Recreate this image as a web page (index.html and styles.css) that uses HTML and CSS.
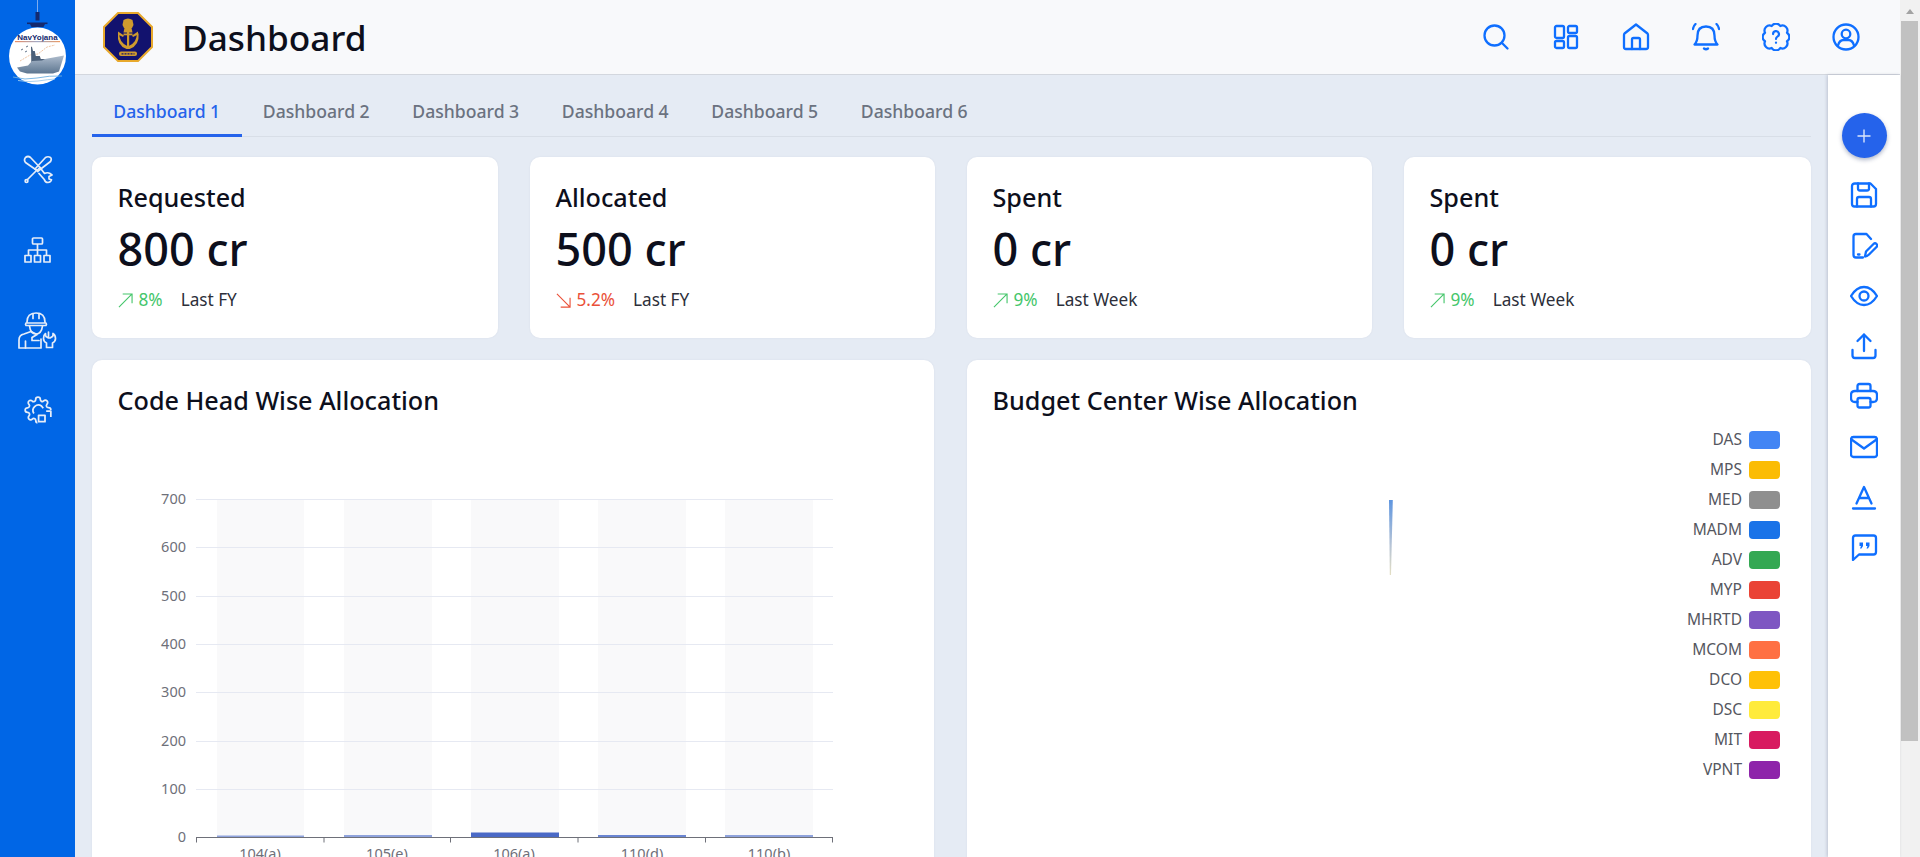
FILE: index.html
```html
<!DOCTYPE html>
<html lang="en">
<head>
<meta charset="utf-8">
<title>Dashboard</title>
<link rel="stylesheet" href="styles.css">
</head>
<body>
<div class="app">
  <aside class="sidebar">
    <div class="brand">
      <svg class="brand-art" viewBox="0 0 75 90" width="75" height="90">
        <defs>
          <linearGradient id="ribbon" x1="0" x2="1"><stop offset="0" stop-color="#e8703a"/><stop offset="0.5" stop-color="#8a94b8"/><stop offset="1" stop-color="#e8803a"/></linearGradient>
          <linearGradient id="hull" x1="0" x2="0" y1="0" y2="1"><stop offset="0" stop-color="#aebccd"/><stop offset="1" stop-color="#5d7690"/></linearGradient>
        </defs>
        <path d="M37.500 0v13" stroke="#9dbcf0" stroke-width="0.8"/>
        <path d="M35.500 12h4v8.500h-4z" fill="#14296e"/>
        <path d="M27 22.500h20.500v1.600h-20.500z" fill="#14296e"/>
        <path d="M30 24h15l-1.500 3h-12z" fill="#14296e"/>
        <circle cx="37.500" cy="56" r="28.500" fill="#fff"/>
        <text class="brand-name" x="37.500" y="39.500" text-anchor="middle">NavYojana</text>
        <rect x="15" y="41" width="45" height="1.200" fill="url(#ribbon)" opacity="0.8"/>
        <path d="M20 61l10-6 8-1 9-7 8-2" fill="none" stroke="#e9b48c" stroke-width="0.8" stroke-dasharray="2 1"/>
        <path d="M21 50l2-1m2 3l2-1m-1-4l2-1" stroke="#50647c" stroke-width="0.9"/>
        <path d="M31 46.500l1 .5 1 4h1.800l1 5h4l1 3h4l.5 2-14 3z" fill="#4c6079"/>
        <path d="M17 67.500l11-2 4-4.500 10-.5 3-1.500 19-3.500-5 16-6 2H27l-7-2z" fill="url(#hull)"/>
        <path d="M13 77q12 3.500 24 1t25-2" fill="none" stroke="#6fb0e0" stroke-width="0.9"/>
        <path d="M18 80.500q10 2 20 .5t17-2" fill="none" stroke="#9fcbec" stroke-width="0.9"/>
      </svg>
    </div>
    <nav class="side-nav">
      <a class="side-item"><svg viewBox="0 0 30 30" width="30" height="30"><g fill="none" stroke="#e6edf8" stroke-width="1.700" stroke-linejoin="round" stroke-linecap="round"><path d="M22.500 2.500L12 14l2.500 2.500L27.500 6.500q1.500-2.500 0-4-2.500-1.500-5 0z"/><path d="M12.500 16.500L4.500 24.500"/><circle cx="3.500" cy="26" r="1.400"/><path d="M2.500 2.500q2.500-2 5 0l9.500 10-3 3-11.500-8q-2-2.500 0-5z"/><path d="M17 12.500l4.500 6q3-1.500 5.500 0l2 1.500-3 1.500v2.500l2.500 .8q-1 2.700-3.500 2.700-3 0-3.700-3l-5.300-6"/></g></svg></a>
      <a class="side-item"><svg viewBox="0 0 27 27" width="27" height="27"><g fill="none" stroke="#e6edf8" stroke-width="1.700" stroke-linejoin="round"><rect x="8.500" y="1" width="10" height="6" rx="1"/><path d="M13.500 7v11M4.500 18v-5h18v5"/><rect x="1" y="18.500" width="6" height="6.500"/><rect x="10.500" y="18.500" width="6" height="6.500"/><rect x="20" y="18.500" width="6" height="6.500"/></g></svg></a>
      <a class="side-item"><svg viewBox="0 0 39 38" width="39" height="38"><g fill="none" stroke="#e6edf8" stroke-width="1.700" stroke-linejoin="round" stroke-linecap="round"><path d="M9 11q0-9 9-9t9 9M8 12h20q1 1 0 2.500H8q-1-1.500 0-2.500z"/><path d="M15 2.500v5M21 2.500v5"/><path d="M11.500 15q1 8 6.500 8t6.500-8"/><path d="M1 37v-8q0-5 5-6l7-2.500 6 3-5 3v3h7M23 37H1M23 37v-9"/><path d="M7.500 37v-7"/><path d="M31 21.500v6l-2.500-1.500q-.5-1-.5-3-2 1.500-2 5 0 3 3 4.500V37h6v-4.500q3-1.500 3-4.500 0-3.500-2.500-5 .2 2-.5 3l-2.500 1.500" transform="translate(-.5 -.5)"/></g></svg></a>
      <a class="side-item"><svg viewBox="0 0 24 24" width="28" height="28"><path d="M19.400 15a1.650 1.650 0 0 0 .33 1.820l.06.06a2 2 0 0 1 0 2.830 2 2 0 0 1-2.830 0l-.06-.06a1.650 1.650 0 0 0-1.820-.33 1.650 1.650 0 0 0-1 1.510V21a2 2 0 0 1-2 2 2 2 0 0 1-2-2v-.09A1.650 1.650 0 0 0 9 19.400a1.650 1.650 0 0 0-1.820.33l-.06.06a2 2 0 0 1-2.830 0 2 2 0 0 1 0-2.830l.06-.06a1.650 1.650 0 0 0 .33-1.820 1.650 1.650 0 0 0-1.510-1H3a2 2 0 0 1-2-2 2 2 0 0 1 2-2h.09A1.650 1.650 0 0 0 4.600 9a1.650 1.650 0 0 0-.33-1.820l-.06-.06a2 2 0 0 1 0-2.830 2 2 0 0 1 2.830 0l.06.06a1.650 1.650 0 0 0 1.820.33H9a1.650 1.650 0 0 0 1-1.510V3a2 2 0 0 1 2-2 2 2 0 0 1 2 2v.09a1.650 1.650 0 0 0 1 1.510 1.650 1.650 0 0 0 1.820-.33l.06-.06a2 2 0 0 1 2.830 0 2 2 0 0 1 0 2.830l-.06.06a1.650 1.650 0 0 0-.33 1.820V9a1.650 1.650 0 0 0 1.510 1H21a2 2 0 0 1 2 2 2 2 0 0 1-2 2h-.09a1.650 1.650 0 0 0-1.510 1z" fill="none" stroke="#e6edf8" stroke-width="1.500"/><rect x="11.500" y="12" width="13" height="12" fill="#0066e6"/><g fill="none" stroke="#e6edf8" stroke-width="1.500" stroke-linejoin="round"><rect x="12.500" y="16.500" width="5.500" height="5.500"/><path d="M19 13h4v5"/><path d="M8.500 15a4.700 4.700 0 0 1 6.500-6.500l1.500 2"/></g></svg></a>
    </nav>
  </aside>

  <div class="main">
    <header class="topbar">
      <div class="topbar-left">
        <svg class="crest" viewBox="0 0 50 50" width="50" height="50">
          <path d="M15 1h20l14 14v20L35 49H15L1 35V15z" fill="#12126e" stroke="#e8a92c" stroke-width="2"/>
          <g fill="#cf9a2e">
            <path d="M20.500 8q4.500-3 9 0l1 5-1.500 3h-8l-1.500-3z"/>
            <path d="M21.500 16h7l1 4.500h-9z"/>
            <path d="M24 20h2.200v14H24z"/>
            <path d="M20.500 21.500h9v1.800h-9z"/>
            <path d="M14.500 21.500l1.800-.5q-.5 9 8 13h1.500q8.500-4 8-13l1.800.5q1 12-9 15.500h-3q-10-3.500-8.600-15.500z"/>
            <path d="M15 19.500l6 4-1 1.500-5-2.500zM35 19.500l-6 4 1 1.500 5-2.500z"/>
            <rect x="16" y="39.500" width="18" height="4.500" rx="2"/>
          </g>
          <path d="M18.500 41.800h13" stroke="#12126e" stroke-width="1.200" stroke-dasharray="2 1"/>
        </svg>
        <h1 class="page-title">Dashboard</h1>
      </div>
      <div class="topbar-icons">
        <svg class="ico" viewBox="0 0 28 28"><circle cx="12.500" cy="12.500" r="10"/><path d="M20 20l5.500 5.500"/></svg>
        <svg class="ico" viewBox="0 0 28 28"><rect x="3" y="3" width="9" height="12" rx="1.500"/><rect x="16" y="3" width="9" height="7" rx="1.500"/><rect x="3" y="18" width="9" height="7" rx="1.500"/><rect x="16" y="13" width="9" height="12" rx="1.500"/></svg>
        <svg class="ico" viewBox="0 0 28 28"><path d="M14 1.500L2.500 10.500q-.5.500-.5 1.500V24q0 2 2 2h20q2 0 2-2V12q0-1-.5-1.500z"/><path d="M10 26V16.500q0-1.500 1.500-1.500h5q1.500 0 1.500 1.500V26"/></svg>
        <svg class="ico" viewBox="0 0 28 28"><path d="M2.500 21.500q3-3 3-9 0-9 8.500-9t8.500 9q0 6 3 9z"/><path d="M12 25.500q2 1.500 4 0"/><path d="M1 6q.3-3 2.500-5M27 6q-.3-3-2.500-5"/></svg>
        <svg class="ico ico-help" viewBox="0 0 24 24"><path d="M15.670 2.600A4.300 4.300 0 0 1 21.400 8.330A4.300 4.300 0 0 1 21.400 15.670A4.300 4.300 0 0 1 15.670 21.400A4.300 4.300 0 0 1 8.330 21.400A4.300 4.300 0 0 1 2.600 15.670A4.300 4.300 0 0 1 2.600 8.330A4.300 4.300 0 0 1 8.330 2.600A4.300 4.300 0 0 1 15.670 2.600z"/><path d="M9.500 9.500a2.500 2.500 0 1 1 3.700 2.200q-1.200.7-1.200 2"/><path d="M12 16.800v.2"/></svg>
        <svg class="ico" viewBox="0 0 28 28"><circle cx="14" cy="14" r="12.500"/><circle cx="14" cy="11" r="4.300"/><path d="M6 22.500q1.500-5.500 5.500-5.500h5q4 0 5.500 5.500"/></svg>
      </div>
    </header>

    <div class="workspace">
      <main class="content">
        <nav class="tabs">
          <a class="tab tab-active">Dashboard 1</a>
          <a class="tab">Dashboard 2</a>
          <a class="tab">Dashboard 3</a>
          <a class="tab">Dashboard 4</a>
          <a class="tab">Dashboard 5</a>
          <a class="tab">Dashboard 6</a>
        </nav>

        <section class="stats">
          <article class="card stat">
            <h2 class="stat-title">Requested</h2>
            <div class="stat-value">800 cr</div>
            <div class="stat-foot"><span class="delta up"><svg class="arrow" viewBox="0 0 16 16"><path d="M1 15L15 1M5 1h10v10"/></svg>8%</span><span class="period">Last FY</span></div>
          </article>
          <article class="card stat">
            <h2 class="stat-title">Allocated</h2>
            <div class="stat-value">500 cr</div>
            <div class="stat-foot"><span class="delta down"><svg class="arrow" viewBox="0 0 16 16"><path d="M1 1l14 14M5 15h10V5"/></svg>5.2%</span><span class="period">Last FY</span></div>
          </article>
          <article class="card stat">
            <h2 class="stat-title">Spent</h2>
            <div class="stat-value">0 cr</div>
            <div class="stat-foot"><span class="delta up"><svg class="arrow" viewBox="0 0 16 16"><path d="M1 15L15 1M5 1h10v10"/></svg>9%</span><span class="period">Last Week</span></div>
          </article>
          <article class="card stat">
            <h2 class="stat-title">Spent</h2>
            <div class="stat-value">0 cr</div>
            <div class="stat-foot"><span class="delta up"><svg class="arrow" viewBox="0 0 16 16"><path d="M1 15L15 1M5 1h10v10"/></svg>9%</span><span class="period">Last Week</span></div>
          </article>
        </section>

        <section class="charts">
          <article class="card chart-card">
            <h2 class="chart-title">Code Head Wise Allocation</h2>
            <svg class="bar-chart" viewBox="0 0 842 460" width="842" height="460">
              <g fill="#f9f9fa">
                <rect x="125" y="79.500" width="87" height="337"/>
                <rect x="252" y="79.500" width="88" height="337"/>
                <rect x="379" y="79.500" width="88" height="337"/>
                <rect x="506" y="79.500" width="88" height="337"/>
                <rect x="633" y="79.500" width="88" height="337"/>
              </g>
              <g stroke="#e6e9f2" stroke-width="1">
                <path d="M104 79.500H741M104 127.500H741M104 176.500H741M104 224.500H741M104 272.500H741M104 321.500H741M104 369.500H741"/>
              </g>
              <g fill="#8fa3dc">
                <rect x="125" y="415.500" width="87" height="1.500"/>
                <rect x="252" y="415" width="88" height="2"/>
                <rect x="506" y="415" width="88" height="2" fill="#6a85d2"/>
                <rect x="633" y="415" width="88" height="2"/>
              </g>
              <rect x="379" y="412.500" width="88" height="4.500" fill="#4a69c6"/>
              <path d="M104 417.500H741M104.500 417.500v5M232 417.500v5M358.500 417.500v5M486 417.500v5M613.500 417.500v5M740.500 417.500v5" fill="none" stroke="#6e7079" stroke-width="1"/>
              <g class="axis-text" text-anchor="end">
                <text x="94" y="83.500">700</text>
                <text x="94" y="131.500">600</text>
                <text x="94" y="180.500">500</text>
                <text x="94" y="228.500">400</text>
                <text x="94" y="276.500">300</text>
                <text x="94" y="325.500">200</text>
                <text x="94" y="373.500">100</text>
                <text x="94" y="421.500">0</text>
              </g>
              <g class="axis-text" text-anchor="middle">
                <text x="168" y="439">104(a)</text>
                <text x="295" y="439">105(e)</text>
                <text x="422" y="439">106(a)</text>
                <text x="550" y="439">110(d)</text>
                <text x="677" y="439">110(b)</text>
              </g>
            </svg>
          </article>
          <article class="card chart-card">
            <h2 class="chart-title">Budget Center Wise Allocation</h2>
            <div class="pie-body">
              <svg class="pie" viewBox="0 0 500 460" width="500" height="460">
                <defs><linearGradient id="sliver" x1="0" x2="0" y1="0" y2="1"><stop offset="0" stop-color="#5f96e0"/><stop offset="0.6" stop-color="#b6c4d6"/><stop offset="1" stop-color="#e4dfc4"/></linearGradient></defs>
                <path d="M422 80h3.800l-1.800 75h-1.200z" fill="url(#sliver)"/>
              </svg>
              <ul class="legend">
                <li class="legend-row">DAS<span class="swatch c-das"></span></li>
                <li class="legend-row">MPS<span class="swatch c-mps"></span></li>
                <li class="legend-row">MED<span class="swatch c-med"></span></li>
                <li class="legend-row">MADM<span class="swatch c-madm"></span></li>
                <li class="legend-row">ADV<span class="swatch c-adv"></span></li>
                <li class="legend-row">MYP<span class="swatch c-myp"></span></li>
                <li class="legend-row">MHRTD<span class="swatch c-mhrtd"></span></li>
                <li class="legend-row">MCOM<span class="swatch c-mcom"></span></li>
                <li class="legend-row">DCO<span class="swatch c-dco"></span></li>
                <li class="legend-row">DSC<span class="swatch c-dsc"></span></li>
                <li class="legend-row">MIT<span class="swatch c-mit"></span></li>
                <li class="legend-row">VPNT<span class="swatch c-vpnt"></span></li>
              </ul>
            </div>
          </article>
        </section>
      </main>

      <aside class="rail">
        <button class="fab"><svg viewBox="0 0 16 16" width="16" height="16"><path d="M8 1.500v13M1.500 8h13" stroke="#dbe6fb" stroke-width="1.400" fill="none"/></svg></button>
        <svg class="ico" viewBox="0 0 28 28"><path d="M5 2.500h15.500L26 8v15q0 2.500-2.500 2.500h-19Q2 25.500 2 23V5q0-2.500 3-2.500z"/><path d="M8 2.500v5q0 2 2 2h7q2 0 2-2v-5"/><path d="M7 25.500V18q0-2 2-2h10q2 0 2 2v7.500"/></svg>
        <svg class="ico" viewBox="0 0 28 28"><path d="M21 7L16.500 2H6Q3.500 2 3.500 4.500V23q0 2.500 2.500 2.500h7"/><path d="M8 22.500h1.500"/><path d="M15 24.500l1-5 7.500-7.500q1.500-1.500 3 0t0 3L19 22.500q-2 2-4 2z"/></svg>
        <svg class="ico" viewBox="0 0 28 28"><path d="M1 14Q6.500 5 14 5t13 9q-5.500 9-13 9T1 14z"/><circle cx="14" cy="14" r="4.500"/></svg>
        <svg class="ico" viewBox="0 0 28 28"><path d="M2.500 18v5.500q0 2.500 2.500 2.500h18q2.500 0 2.500-2.500V18"/><path d="M14 19V2.500M7.500 9L14 2.500 20.500 9"/></svg>
        <svg class="ico" viewBox="0 0 28 28"><path d="M7.500 9V4q0-2 2-2h9q2 0 2 2v5"/><path d="M7.500 20H5q-4 0-4-4v-3q0-4 4-4h18q4 0 4 4v3q0 4-4 4h-2.500"/><rect x="7.500" y="16" width="13" height="9.500" rx="2"/></svg>
        <svg class="ico" viewBox="0 0 28 28"><rect x="1" y="4" width="26" height="20" rx="2.500"/><path d="M1.500 6.500L14 15.500 26.500 6.500"/></svg>
        <svg class="ico" viewBox="0 0 28 28"><path d="M6.500 20.500L14 4l7.500 16.500M9 15h10"/><path d="M3 25.500h22"/></svg>
        <svg class="ico" viewBox="0 0 28 28"><path d="M3 27V5q0-2.500 2.500-2.500h18Q26 2.500 26 5v14q0 2.500-2.500 2.500H9z"/><path class="ico-fill" d="M9.500 9.500h3.500v3.500l-1.500 2.500h-1.500l1-2.500H9.500zM16 9.500h3.500v3.500L18 15.500h-1.500l1-2.500H16z"/></svg>
      </aside>
    </div>
  </div>

  <div class="scrollbar"><span class="scroll-up"></span><span class="scroll-thumb"></span></div>
</div>
</body>
</html>
```

FILE: styles.css
```css
* { box-sizing: border-box; }
html, body { margin: 0; height: 857px; overflow: hidden; }
body { font-family: "Noto Sans", "Open Sans", "Liberation Sans", sans-serif; color: #0d0f1c; background: #e5ebf4; }
h1, h2, ul { margin: 0; padding: 0; }

.app { display: flex; height: 857px; width: 1920px; overflow: hidden; }

.sidebar { flex: 0 0 75px; background: #0066e6; display: flex; flex-direction: column; }
.brand { height: 130px; }
.brand-art { display: block; }
.brand-name { font: 700 8px "Liberation Sans", sans-serif; fill: #14296e; }
.side-nav { display: flex; flex-direction: column; }
.side-item { height: 80px; display: flex; align-items: center; justify-content: center; }

.main { flex: 1; min-width: 0; display: flex; flex-direction: column; }
.topbar { flex: 0 0 75px; display: flex; align-items: center; justify-content: space-between; background: #f8f9fb; border-bottom: 1px solid #d3d7de; padding: 0 40px 1px 28px; }
.topbar-left { display: flex; align-items: center; gap: 29px; }
.crest { display: block; }
.page-title { font-size: 35.200px; font-weight: 500; line-height: 44px; color: #0d0f1c; }
.topbar-icons { display: flex; gap: 42px; }

.ico { width: 28px; height: 28px; display: block; fill: none; stroke: #0f6fff; stroke-width: 2.300; stroke-linecap: round; stroke-linejoin: round; }
.ico-help { stroke-width: 1.900; }
.ico-fill { fill: #0f6fff; stroke: none; }

.workspace { flex: 1; min-height: 0; display: flex; }
.content { flex: 1; min-width: 0; padding: 0 17px; }

.tabs { display: flex; height: 62px; border-bottom: 1px solid #d8dee7; align-items: flex-end; }
.tab { width: 149.500px; text-align: center; font-size: 17.600px; font-weight: 500; line-height: 22px; padding: 3px 0 0; color: #6b7280; height: 40px; margin-bottom: -1px; border-bottom: 3px solid transparent; }
.tab-active { color: #2563eb; border-bottom-color: #2563eb; }

.stats { display: grid; grid-template-columns: 406px 405px 405px 1fr; column-gap: 32px; margin-top: 20px; }
.card { background: #fff; border-radius: 10px; box-shadow: 0 0 2px rgba(60, 70, 100, 0.08); }
.stat { height: 181px; padding: 25px 25.500px 0; }
.stat-title { font-size: 25.200px; font-weight: 500; line-height: 30px; }
.stat-value { font-size: 45px; font-weight: 500; line-height: 62px; margin-top: 6px; }
.stat-foot { display: flex; font-size: 17.200px; line-height: 22px; margin-top: 9px; align-items: center; }
.delta { display: flex; align-items: center; gap: 6px; margin-right: 18px; }
.up { color: #45c66b; }
.down { color: #ea5139; }
.arrow { width: 15px; height: 15px; fill: none; stroke: currentColor; stroke-width: 1.200; }
.period { color: #2d2f3a; }

.charts { display: grid; grid-template-columns: 842px 1fr; column-gap: 33px; margin-top: 22px; }
.chart-card { height: 560px; }
.chart-title { font-size: 25.200px; font-weight: 500; line-height: 30px; padding: 25px 25.500px 0; margin-bottom: 5px; }
.bar-chart { display: block; }
.axis-text { font-size: 14.500px; fill: #6e7079; }

.pie-body { display: flex; justify-content: space-between; padding-right: 31px; }
.pie { display: block; flex: 0 0 500px; }
.legend { list-style: none; display: flex; flex-direction: column; padding-top: 11px; }
.legend-row { display: flex; align-items: flex-start; justify-content: flex-end; gap: 7px; height: 18px; margin-bottom: 12px; font-size: 15.500px; line-height: 16px; color: #555760; }
.swatch { width: 31px; height: 18px; border-radius: 4px; }
.c-das { background: #4285f4; }
.c-mps { background: #fbbc04; }
.c-med { background: #8f8f8f; }
.c-madm { background: #1a73e8; }
.c-adv { background: #34a853; }
.c-myp { background: #ea4335; }
.c-mhrtd { background: #7e57c2; }
.c-mcom { background: #ff7043; }
.c-dco { background: #ffc107; }
.c-dsc { background: #ffeb3b; }
.c-mit { background: #d81b60; }
.c-vpnt { background: #8e24aa; }

.rail { flex: 0 0 72px; background: #fff; box-shadow: -1px 0 3px rgba(70, 80, 110, 0.25); display: flex; flex-direction: column; align-items: center; gap: 22.300px; padding-top: 38px; position: relative; }
.fab { width: 45px; height: 45px; border: 0; border-radius: 50%; background: #2563eb; box-shadow: 0 2px 4px rgba(30, 50, 100, 0.35); display: flex; align-items: center; justify-content: center; padding: 0; margin-bottom: 1px; }

.scrollbar { flex: 0 0 20px; background: #f1f1f1; display: flex; flex-direction: column; padding: 0 2px 0 1px; }
.scroll-up { height: 21px; display: flex; justify-content: center; padding-top: 9px; }
.scroll-up::before { content: ""; width: 0; height: 0; border-left: 4.500px solid transparent; border-right: 4.500px solid transparent; border-bottom: 5px solid #a3a3a3; }
.scroll-thumb { height: 720px; background: #c1c1c1; }
```
